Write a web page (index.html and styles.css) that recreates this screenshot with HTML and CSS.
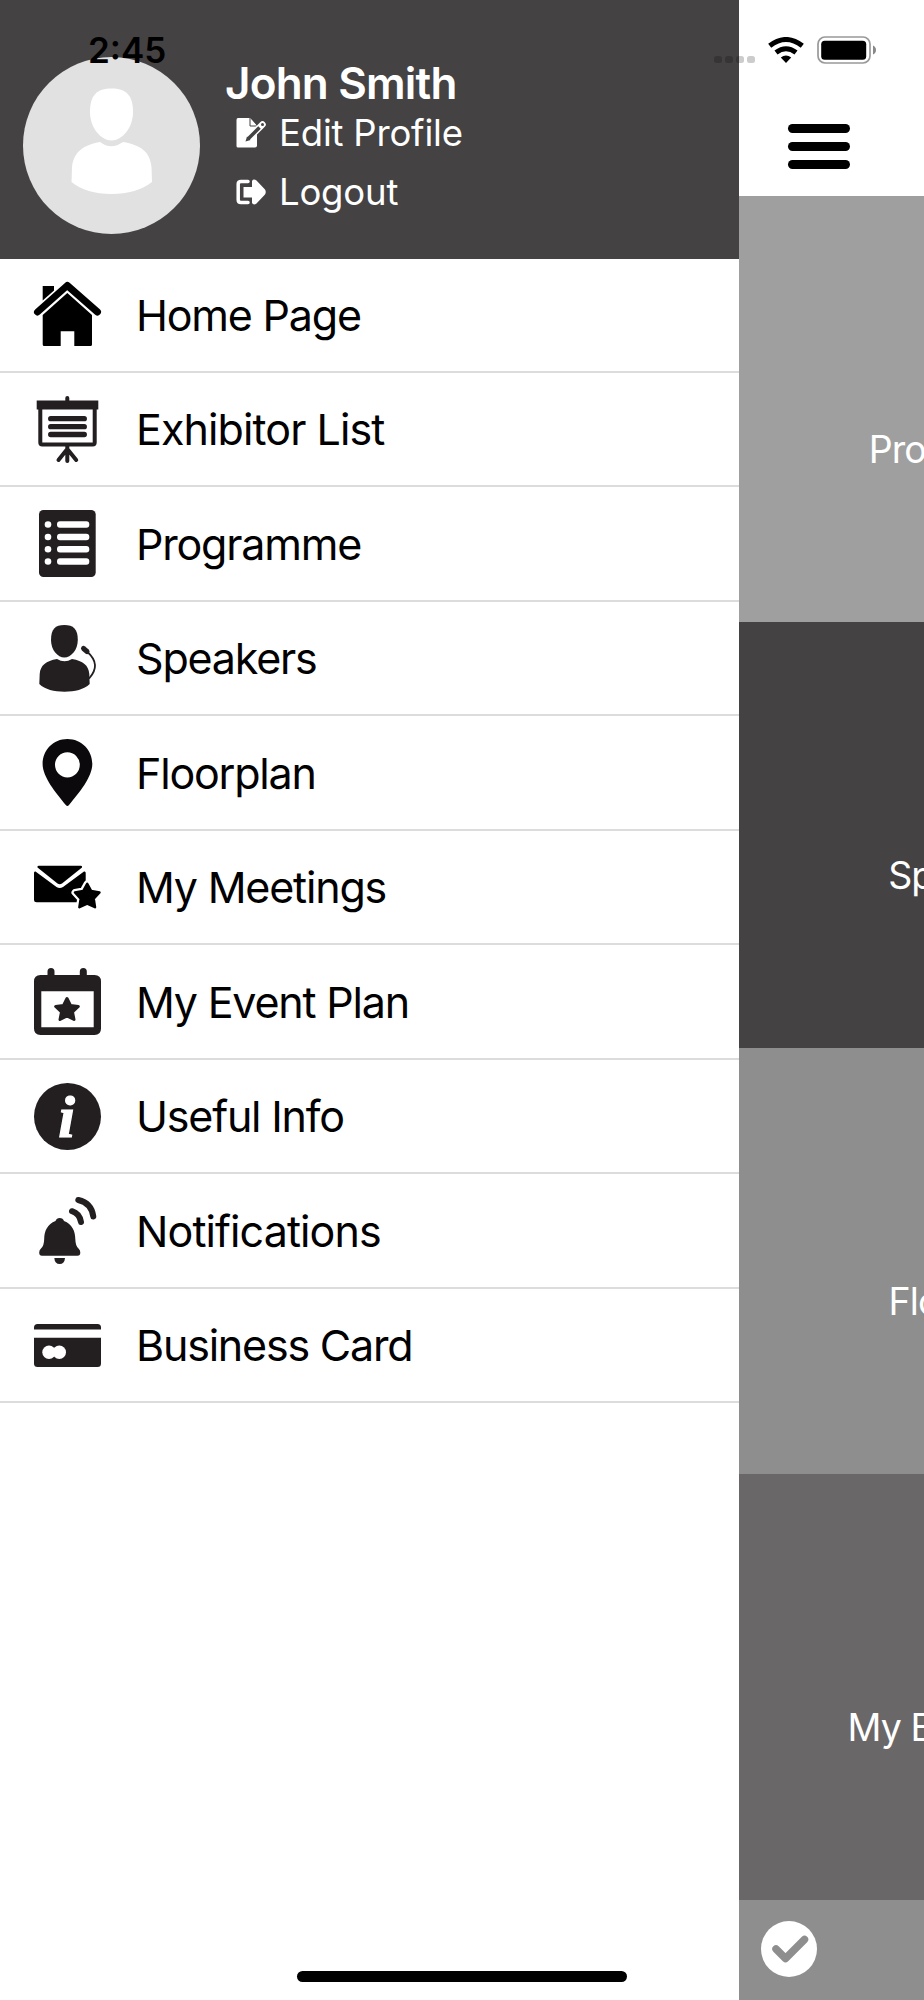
FILE: index.html
```html
<!DOCTYPE html>
<html lang="en">
<head>
    <meta charset="UTF-8">
    <meta name="viewport" content="width=device-width, initial-scale=1.0">
    <title>Event App - Menu</title>
    <link rel="stylesheet" href="styles.css">
</head>
<body>
    <div class="screen">
        <!-- Side Menu -->
        <aside class="side-menu">
            <div class="profile">
                <svg class="avatar" viewBox="0 0 177 177">
                    <circle cx="88.500" cy="88.500" r="88.500" fill="#e1e1e1"/>
                    <path fill="#fff" d="M88.500 31.500C103 31.500 110 38 110 55C110 71 99 83.500 88.500 83.500C78 83.500 67 71 67 55C67 38 74 31.500 88.500 31.500Z"/>
                    <path fill="#fff" d="M77 85Q88 93.500 100 85C117 88 127 94 128.500 110L129 125C119 133 105 137 88.500 137C72 137 58 133 48.500 125L49 110C51 94 61 88 77 85Z"/>
                </svg>
                <div class="profile-info">
                    <h2>John Smith</h2>
                    <a href="#" class="profile-link">
                        <svg viewBox="0 0 30 30">
                            <path fill="#fff" d="M2 0H14L21 8V27.500Q21 29.500 19 29.500H2Q.5 29.500 .5 28V2Q.5 0 2 0Z"/>
                            <path stroke="#454243" stroke-width="1" fill="#fff" d="M14 0V8H21"/>
                            <path stroke="#fff" stroke-width="6.500" stroke-linecap="round" d="M15.500 17.500L26.500 6.500"/>
                            <path stroke="#454243" stroke-width="3.500" d="M12 21L23.500 9.500"/>
                            <path fill="#454243" d="M9.500 23.500L11 18.500L14.500 22Z"/>
                            <circle cx="26.500" cy="6.500" r="1.500" fill="#454243"/>
                        </svg>
                        <span>Edit Profile</span>
                    </a>
                    <a href="#" class="profile-link">
                        <svg viewBox="0 0 30 30">
                            <path fill="none" stroke="#fff" stroke-width="3.500" stroke-linecap="round" stroke-linejoin="round" d="M12 4.500H5Q2.200 4.500 2.200 7V23Q2.200 25.500 5 25.500H12"/>
                            <path fill="#fff" d="M7.500 10H16V4Q17.500 1.500 20.500 3.500L29 12.500Q30.500 15 29 17.500L20.500 26.500Q17.500 28.500 16 26V20.500H7.500Z"/>
                        </svg>
                        <span>Logout</span>
                    </a>
                </div>
            </div>

            <nav class="menu-list">
                <a href="#" class="menu-item">
                    <svg viewBox="0 0 67 67" class="black">
                        <path d="M8.700 5H20V9.500L8.700 19.500Z"/>
                        <path class="line" stroke-width="7" d="M3.500 31L33.300 4.500L63.500 31"/>
                        <path d="M33.300 12L58 34V63.500Q58 65 56.500 65H40.300V50.300H26.700V65H10.200Q8.700 65 8.700 63.500V34Z"/>
                    </svg>
                    <span>Home Page</span>
                </a>
                <a href="#" class="menu-item wide">
                    <svg viewBox="0 0 67 67">
                        <path class="line" stroke-width="4" d="M33.300 2V8M33.300 50V65M33.300 53L24.500 64M33.300 53L42.200 64"/>
                        <rect x="2.700" y="4.500" width="61.600" height="9"/>
                        <path class="line" stroke-width="4" d="M6.300 12V46.500Q6.300 48.500 8.300 48.500H58.700Q60.700 48.500 60.700 46.500V12"/>
                        <path class="line" stroke-width="5.300" d="M16.700 22.700H50.300M16.700 30.700H50.300M16.700 38.500H50.300"/>
                    </svg>
                    <span>Exhibitor List</span>
                </a>
                <a href="#" class="menu-item">
                    <svg viewBox="0 0 67 67">
                        <rect x="5" y="0" width="56.700" height="67" rx="4.500"/>
                        <g fill="#fff">
                            <circle cx="14" cy="14.500" r="3.300"/>
                            <circle cx="14" cy="27" r="3.300"/>
                            <circle cx="14" cy="39.200" r="3.300"/>
                            <circle cx="14" cy="51.500" r="3.300"/>
                            <rect x="23" y="11.200" width="32.300" height="6.600" rx="3"/>
                            <rect x="23" y="23.700" width="32.300" height="6.600" rx="3"/>
                            <rect x="23" y="35.900" width="32.300" height="6.600" rx="3"/>
                            <rect x="23" y="48.200" width="32.300" height="6.600" rx="3"/>
                        </g>
                    </svg>
                    <span>Programme</span>
                </a>
                <a href="#" class="menu-item">
                    <svg viewBox="0 0 67 67">
                        <path d="M30.300 0C39.500 0 43.800 4 43.800 15C43.800 25 37 32.500 30.300 32.500C23.700 32.500 17 25 17 15C17 4 21.200 0 30.300 0Z"/>
                        <path d="M23 34Q30.500 38.500 38 34C49 36 54.500 40 55.300 49L55.700 59C50 64.500 41 66.700 30.500 66.700C20 66.700 11 64.500 5.300 59L5.700 49C6.500 40 12 36 23 34Z"/>
                        <path class="line" stroke-width="5" d="M49.500 23.500L53 26.500"/>
                        <path class="line" stroke-width="1.800" d="M53 26.500C63.500 36 63 44 55.500 53"/>
                    </svg>
                    <span>Speakers</span>
                </a>
                <a href="#" class="menu-item">
                    <svg viewBox="0 0 67 67" class="pin">
                        <path fill-rule="evenodd" d="M33.400 0C47.500 0 58.300 11 58.300 25C58.300 38 45 54 35 66Q33.400 68 31.800 66C22 54 8.600 38 8.600 25C8.600 11 19.300 0 33.400 0ZM33.400 13.200A12.400 12.600 0 1 0 33.400 38.400A12.400 12.600 0 1 0 33.400 13.200Z"/>
                    </svg>
                    <span>Floorplan</span>
                </a>
                <a href="#" class="menu-item">
                    <svg viewBox="0 0 67 67" class="black">
                        <path d="M4.500 11.700H47Q48.500 12 48 13.500L28 29.500Q25.700 31 23.500 29.500L3.500 13.500Q3 12 4.500 11.700Z"/>
                        <path d="M1.500 17.500L22.500 33Q25.700 35 29 33L50 17.500Q51.700 17 51.700 19V48.300H2.500Q0 48.300 0 46V19Q0 17 1.500 17.500Z"/>
                        <path stroke="#fff" stroke-width="7" stroke-linejoin="round" d="M53.200 29.800L57.200 37L65.500 38.500L59.700 44.700L61 53.200L53.200 49.500L45.400 53.200L46.700 44.700L41 38.500L49.200 37Z"/>
                        <path stroke="#000" stroke-width="2.500" stroke-linejoin="round" d="M53.200 29.800L57.200 37L65.500 38.500L59.700 44.700L61 53.200L53.200 49.500L45.400 53.200L46.700 44.700L41 38.500L49.200 37Z"/>
                    </svg>
                    <span>My Meetings</span>
                </a>
                <a href="#" class="menu-item">
                    <svg viewBox="0 0 67 67">
                        <path class="line" stroke-width="7" d="M17 3.500V12M49.300 3.500V12"/>
                        <path fill-rule="evenodd" d="M6.500 7H60.500Q67 7 67 13.500V60.500Q67 67 60.500 67H6.500Q0 67 0 60.500V13.500Q0 7 6.500 7ZM7.300 23.300V59.300H59.700V23.300Z"/>
                        <path class="line filled" stroke-width="3" d="M33 30.500L36.500 37.500L44.300 38.500L38.500 44L40 51.500L33 48L26 51.500L27.500 44L21.700 38.500L29.500 37.500Z"/>
                    </svg>
                    <span>My Event Plan</span>
                </a>
                <a href="#" class="menu-item">
                    <svg viewBox="0 0 67 67">
                        <circle cx="33.500" cy="33.500" r="33.500"/>
                        <text x="32.500" y="53.500" class="info-letter">i</text>
                    </svg>
                    <span>Useful Info</span>
                </a>
                <a href="#" class="menu-item wide">
                    <svg viewBox="0 0 67 67">
                        <path d="M25.700 21Q29 21 30 24C38 27 41.300 34 41.300 42Q41.500 49 44.500 51.500Q46.300 53 46.300 55.500Q46.300 58.700 43.500 58.700H8Q5.200 58.700 5.200 55.500Q5.200 53 7 51.500Q10 49 10.200 42C10.200 34 13.500 27 21.500 24Q22.500 21 25.700 21Z"/>
                        <path d="M20.300 61H31Q30.500 67 25.700 67Q20.800 67 20.300 61Z"/>
                        <path class="line" stroke-width="6" d="M44.300 3Q57.500 6 59.300 19.500M38 14.200Q45.500 16.500 47 25"/>
                    </svg>
                    <span>Notifications</span>
                </a>
                <a href="#" class="menu-item">
                    <svg viewBox="0 0 67 67">
                        <path d="M0 17.500V15.500Q0 12 3.500 12H63.500Q67 12 67 15.500V17.500Z"/>
                        <path d="M0 25.700H67V51.500Q67 55 63.500 55H3.500Q0 55 0 51.500Z"/>
                        <circle cx="15" cy="40.300" r="6.700" fill="#fff"/>
                        <circle cx="25.300" cy="40.300" r="6.700" fill="#fff"/>
                    </svg>
                    <span>Business Card</span>
                </a>
            </nav>
        </aside>

        <!-- Page pushed to the right by the menu -->
        <main class="page">
            <header class="page-header">
                <div class="hamburger">
                    <span></span>
                    <span></span>
                    <span></span>
                </div>
            </header>
            <div class="tile tile-programme">Programme</div>
            <div class="tile tile-speakers">Speakers</div>
            <div class="tile tile-floorplan">Floorplan</div>
            <div class="tile tile-plan">My Event Plan</div>
            <footer class="page-footer">
                <svg viewBox="0 0 56 56">
                    <circle cx="28" cy="28" r="28" fill="#fff"/>
                    <path fill="none" stroke="#8e8e8e" stroke-width="7.500" stroke-linecap="round" stroke-linejoin="round" d="M15 28L24.500 37.500L43.500 18.500"/>
                </svg>
            </footer>
        </main>
    </div>

    <!-- Phone status bar -->
    <div class="status-bar">
        <span class="time">2:45</span>
        <div class="signal"><i></i><i></i><i></i><i></i></div>
        <svg class="wifi" viewBox="0 0 36 26">
            <path fill="none" stroke="#000" stroke-width="5" d="M1.700 8.800Q18 -3.800 34.300 8.800M8 15.600Q18 8 28 15.600"/>
            <path d="M12.800 20.500Q18 16.500 23.200 20.500L18 26Z"/>
        </svg>
        <svg class="battery" viewBox="0 0 60 28">
            <rect x="1" y="1" width="52" height="26" rx="7" fill="none" stroke="#999" stroke-width="1.700"/>
            <rect x="4.200" y="4.700" width="45" height="19" rx="3.500"/>
            <path fill="#888" d="M56 9.500Q59 11 59 14Q59 17 56 18.500Z"/>
        </svg>
    </div>
    <div class="home-indicator"></div>
</body>
</html>
```
FILE: styles.css
```css
/* Color Theme */
:root {
    --dark: #454243;
    --icon-color: #231f20;
    --line-color: #dcdcdc;
}

/* General Styles */
* {
    box-sizing: border-box;
}
body {
    font-family: Inter, "Liberation Sans", sans-serif;
    position: relative;
    height: 2000px;
    margin: 0;
    overflow: hidden;
    background-color: #fff;
    color: #000;
}
a {
    color: inherit;
    text-decoration: none;
}
svg {
    display: block;
    flex-shrink: 0;
}
.screen {
    display: flex;
    height: 2000px;
}

/* Side Menu */
.side-menu {
    width: 739px;
    flex-shrink: 0;
    background-color: #fff;
}
.profile {
    display: flex;
    height: 259px;
    padding: 57px 0 0 23px;
    background-color: var(--dark);
    color: #fff;
}
.avatar {
    width: 177px;
    height: 177px;
}
.profile-info {
    padding-left: 25px;
}
h2 {
    margin: 0;
    font-size: 44px;
    font-weight: 600;
    line-height: 52px;
    letter-spacing: -0.8px;
}
.profile-link {
    display: flex;
    align-items: center;
    height: 59px;
    margin-top: -6px;
    padding-left: 11px;
    font-size: 36.5px;
    letter-spacing: -0.2px;
}
.profile-link + .profile-link {
    margin-top: 0;
}
.profile-link svg {
    width: 30px;
    height: 30px;
    margin-right: 13px;
}
.menu-item {
    display: flex;
    align-items: center;
    height: 114.500px;
    padding-left: 33.500px;
    border-bottom: 2px solid var(--line-color);
    font-size: 43px;
    letter-spacing: -1.2px;
}
.menu-item:first-child {
    height: 113.800px;
}
.menu-item.wide {
    letter-spacing: -0.9px;
}
.menu-item svg {
    width: 67px;
    height: 67px;
    margin-right: 35.500px;
    fill: var(--icon-color);
    stroke: none;
    overflow: visible;
}
.menu-item .line {
    fill: none;
    stroke: var(--icon-color);
    stroke-linecap: round;
    stroke-linejoin: round;
}
.menu-item .filled {
    fill: var(--icon-color);
}
.menu-item .black {
    fill: #000;
}
.menu-item .black .line {
    stroke: #000;
}
.menu-item .pin {
    fill: #0b090b;
}
.info-letter {
    font-family: "Liberation Serif", serif;
    font-size: 60px;
    font-weight: bold;
    font-style: italic;
    text-anchor: middle;
    letter-spacing: 0;
    fill: #fff;
    stroke: #fff;
    stroke-width: 1.2px;
}

/* Page */
.page {
    flex: 1;
    min-width: 0;
    overflow: hidden;
}
.page-header {
    height: 196px;
    padding: 124px 0 0 49px;
}
.hamburger {
    display: flex;
    flex-direction: column;
    gap: 9px;
    width: 62px;
}
.hamburger span {
    height: 9px;
    border-radius: 5px;
    background-color: #000;
}
.tile {
    width: 457px;
    height: 426px;
    padding-top: 232px;
    color: #fff;
    font-size: 37.500px;
    line-height: 44px;
    letter-spacing: -0.9px;
    text-align: center;
}
.tile-programme {
    background-color: #9f9f9f;
}
.tile-speakers {
    background-color: var(--dark);
}
.tile-floorplan {
    background-color: #8e8e8e;
}
.tile-plan {
    background-color: #6a6768;
}
.page-footer {
    height: 102px;
    padding: 21px 0 0 22px;
    background-color: #8e8e8e;
}
.page-footer svg {
    width: 56px;
    height: 56px;
}

/* Status bar sits over the menu and the page */
.status-bar {
    position: absolute;
    top: 36px;
    left: 0;
    display: flex;
    width: 924px;
    height: 28px;
    padding-left: 88px;
}
.time {
    width: 626px;
    font-size: 35px;
    font-weight: 600;
    line-height: 29px;
}
.signal {
    display: flex;
    gap: 3px;
    width: 54px;
    padding-top: 20px;
}
.signal i {
    width: 8px;
    height: 7px;
    border-radius: 2.500px;
    background-color: rgba(0, 0, 0, 0.2);
}
.wifi {
    width: 36px;
    height: 26px;
    margin: 1px 13px 0 0;
}
.battery {
    width: 60px;
    height: 28px;
}
.home-indicator {
    position: absolute;
    left: 297px;
    top: 1971px;
    width: 330px;
    height: 11px;
    border-radius: 6px;
    background-color: #000;
}
```
